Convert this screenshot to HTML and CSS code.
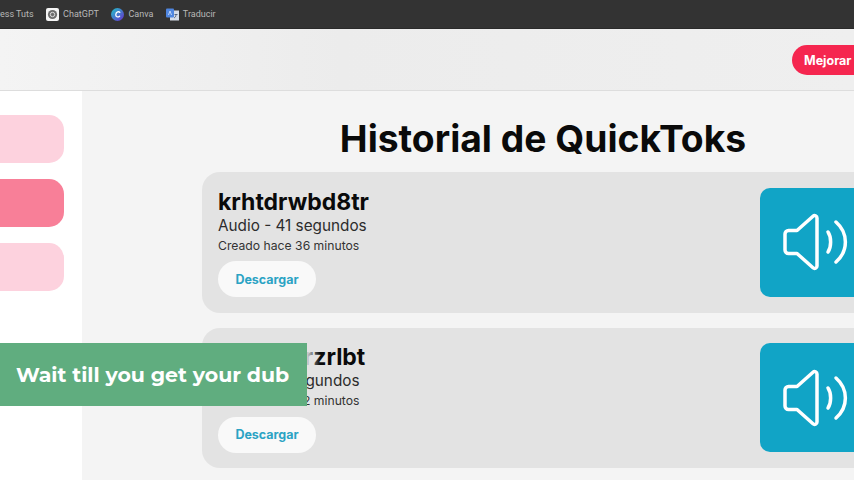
FILE: index.html
```html
<!DOCTYPE html>
<html lang="es">
<head>
<meta charset="utf-8">
<title>Historial de QuickToks</title>
<link rel="stylesheet" href="styles.css">
</head>
<body>
<div class="page">
  <nav class="bookmarks">
    <span class="bm bm-cut">ress Tuts</span>
    <span class="bm"><svg class="bm-icon" viewBox="0 0 13 13"><rect width="13" height="13" rx="2" fill="#f4f4f4"/><circle cx="6.500" cy="6.500" r="4.600" fill="#6d6d6d"/><circle cx="6.500" cy="6.500" r="2.200" fill="none" stroke="#ddd" stroke-width="1"/></svg>ChatGPT</span>
    <span class="bm"><svg class="bm-icon" viewBox="0 0 13 13"><defs><linearGradient id="cv" x1="0" y1="0" x2="1" y2="1"><stop offset="0" stop-color="#1fc4c8"/><stop offset="1" stop-color="#6a2fd0"/></linearGradient></defs><circle cx="6.500" cy="6.500" r="6.500" fill="url(#cv)"/><path d="M8.800 4.400C8 3.200 5.200 3.600 4.800 6.400c-.3 2.400 2 3.200 3.800 1.800" fill="none" stroke="#fff" stroke-width="1.300" stroke-linecap="round"/></svg>Canva</span>
    <span class="bm"><svg class="bm-icon" viewBox="0 0 13 13"><rect x="4" y="2.500" width="9" height="10" fill="#d5dce8"/><rect y="0.500" width="8" height="9" rx="1" fill="#4f86e0"/><path d="M2.500 7L4 3l1.500 4" fill="none" stroke="#cfe0fa" stroke-width=".9"/><path d="M8.500 6.500h3M10 6.500c0 2-1 3-2 3.500" fill="none" stroke="#4a5a78" stroke-width=".9"/></svg>Traducir</span>
  </nav>
  <header class="appbar">
    <button class="upgrade">Mejorar plan</button>
  </header>
  <div class="body">
    <aside class="sidebar">
      <div class="pill"></div>
      <div class="pill pill-active"></div>
      <div class="pill"></div>
    </aside>
    <main class="main">
      <h1 class="title">Historial de QuickToks</h1>
      <div class="list">
        <article class="card">
          <div class="info">
            <h2 class="name">krhtdrwbd8tr</h2>
            <p class="meta">Audio - 41 segundos</p>
            <p class="date">Creado hace 36 minutos</p>
            <button class="download">Descargar</button>
          </div>
          <div class="thumb"><svg class="speaker" viewBox="0 0 68 60"><path d="M3 22a3.500 3.500 0 0 1 3.500-3.500H15L31 4.200c1.600-1.400 4-.4 4 1.800v48c0 2.200-2.400 3.200-4 1.800L15 41.500H6.500A3.500 3.500 0 0 1 3 38z" fill="none" stroke="#fff" stroke-width="3.500" stroke-linejoin="round"/><path d="M46 20c3.500 5 3.500 15 0 20" fill="none" stroke="#fff" stroke-width="3.500" stroke-linecap="round"/><path d="M54 10c12.500 11 12.500 29 0 40" fill="none" stroke="#fff" stroke-width="3.500" stroke-linecap="round"/></svg></div>
        </article>
        <article class="card">
          <div class="info">
            <h2 class="name">krhtdwirzrlbt</h2>
            <p class="meta">Audio - 7 segundos</p>
            <p class="date">Creado hace 42 minutos</p>
            <button class="download">Descargar</button>
          </div>
          <div class="thumb"><svg class="speaker" viewBox="0 0 68 60"><path d="M3 22a3.500 3.500 0 0 1 3.500-3.500H15L31 4.200c1.600-1.400 4-.4 4 1.800v48c0 2.200-2.400 3.200-4 1.800L15 41.500H6.500A3.500 3.500 0 0 1 3 38z" fill="none" stroke="#fff" stroke-width="3.500" stroke-linejoin="round"/><path d="M46 20c3.500 5 3.500 15 0 20" fill="none" stroke="#fff" stroke-width="3.500" stroke-linecap="round"/><path d="M54 10c12.500 11 12.500 29 0 40" fill="none" stroke="#fff" stroke-width="3.500" stroke-linecap="round"/></svg></div>
        </article>
      </div>
    </main>
  </div>
  <div class="caption">Wait till you get your dub</div>
</div>
</body>
</html>
```
FILE: styles.css
```css
* { box-sizing: border-box; }
html, body { margin: 0; padding: 0; }
body { width: 854px; height: 480px; overflow: hidden; background: #f4f4f4; font-family: Inter, "Liberation Sans", sans-serif; }
.page { position: relative; width: 854px; height: 480px; overflow: hidden; display: flex; flex-direction: column; }
.bookmarks { flex: none; height: 29px; background: #333333; display: flex; align-items: center; gap: 12.500px; margin-left: -3px; font-family: Roboto, sans-serif; font-size: 9px; color: #b8b8b8; border-bottom: 1px solid #2a2a2a; }
.bm { display: flex; align-items: center; gap: 4px; white-space: nowrap; }
.bm-icon { width: 13px; height: 13px; flex: none; }
.appbar { flex: none; height: 62px; background: linear-gradient(90deg, #f4f4f4, #ececec 40%, #efefef); border-bottom: 1px solid #dddddd; display: flex; align-items: center; padding-left: 792px; }
.upgrade { flex: none; height: 30px; width: 120px; border: 0; border-radius: 15px; background: #f5264f; color: #fff; font: 700 12.500px Inter, sans-serif; text-align: left; padding: 1px 0 0 12px; white-space: nowrap; }
.body { flex: 1; display: flex; min-height: 0; }
.sidebar { flex: none; width: 82px; background: #fff; display: flex; flex-direction: column; gap: 16px; padding-top: 24px; }
.pill { width: 64px; height: 48px; background: #fdd2de; border-radius: 0 15px 15px 0; }
.pill-active { background: #f87f98; }
.main { flex: none; width: 922px; padding: 28px 120px 0; background: #f4f4f4; }
.title { margin: 0 0 11px; height: 42px; font-size: 37.250px; line-height: 40px; font-weight: 700; color: #0a0a0a; text-align: center; white-space: nowrap; }
.list { display: flex; flex-direction: column; gap: 15px; }
.card { height: 140.500px; background: #e3e3e3; border-radius: 18px; display: flex; align-items: flex-start; justify-content: space-between; padding: 15.500px 14px 0 16px; }
.info { display: flex; flex-direction: column; align-items: flex-start; }
.name { margin: 0; font-size: 23px; line-height: 28px; font-weight: 700; color: #0a0a0a; white-space: nowrap; }
.meta { margin: 0; font-size: 15.300px; line-height: 20px; color: #2c2c2c; white-space: nowrap; }
.date { margin: 0; font-size: 12.200px; line-height: 20px; color: #333; white-space: nowrap; }
.download { margin-top: 5.500px; width: 98px; height: 36px; border: 0; border-radius: 18px; background: #f9f9f9; color: #2ba3c4; font: 700 12.500px Inter, sans-serif; padding: 0; }
.thumb { width: 110px; height: 109px; border-radius: 10px; background: #11a4c6; display: flex; align-items: center; padding-left: 22px; }
.speaker { width: 68px; height: 60px; flex: none; }
.caption { position: absolute; left: 0; top: 343px; width: 307px; height: 63px; background: #60ad7f; color: #fff; font: 700 20.500px/64px Montserrat, "Open Sans", sans-serif; padding-left: 16px; white-space: nowrap; }
.caption::after { content: ""; position: absolute; left: 100%; top: 0; width: 13px; height: 30px; background: linear-gradient(90deg, rgba(227,227,227,.9), rgba(227,227,227,0)); }
```
